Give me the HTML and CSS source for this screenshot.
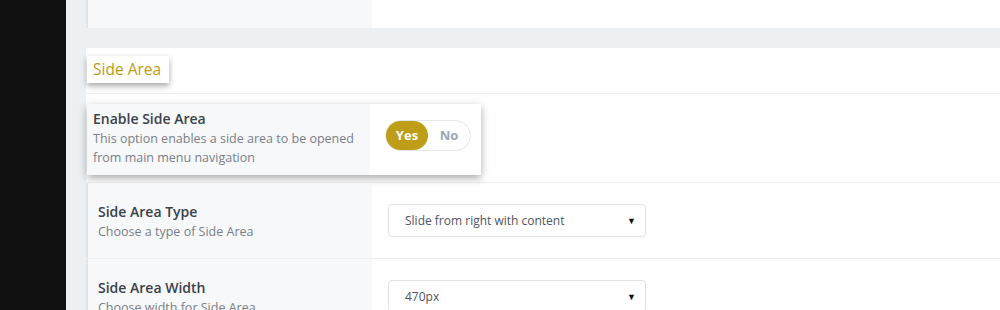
FILE: index.html
```html
<!DOCTYPE html>
<html lang="en">
<head>
    <meta charset="UTF-8">
    <title>Side Area Options</title>
    <link rel="stylesheet" href="styles.css">
</head>
<body>
    <div class="sidebar"></div>
    <main class="main">
        <div class="panel panel-top">
            <div class="opt-row">
                <div class="opt-label"></div>
                <div class="opt-field"></div>
            </div>
        </div>

        <div class="panel section">
            <div class="section-head">
                <h2 class="section-title">Side Area</h2>
            </div>

            <div class="opt-row opt-row-active">
                <div class="card">
                    <div class="card-label">
                        <h3 class="opt-title">Enable Side Area</h3>
                        <p class="opt-desc">This option enables a side area to be opened from main menu navigation</p>
                    </div>
                    <div class="card-field">
                        <div class="switch">
                            <span class="switch-btn on">Yes</span>
                            <span class="switch-btn">No</span>
                        </div>
                    </div>
                </div>
            </div>

            <div class="opt-row">
                <div class="opt-label">
                    <h3 class="opt-title">Side Area Type</h3>
                    <p class="opt-desc">Choose a type of Side Area</p>
                </div>
                <div class="opt-field">
                    <div class="select">
                        <span>Slide from right with content</span>
                        <span class="caret">&#9660;</span>
                    </div>
                </div>
            </div>

            <div class="opt-row">
                <div class="opt-label">
                    <h3 class="opt-title">Side Area Width</h3>
                    <p class="opt-desc">Choose width for Side Area</p>
                </div>
                <div class="opt-field">
                    <div class="select">
                        <span>470px</span>
                        <span class="caret">&#9660;</span>
                    </div>
                </div>
            </div>
        </div>
    </main>
</body>
</html>
```

FILE: styles.css
```css
body {
    margin: 0;
    background-color: #111111;
    font-family: "Open Sans", Arial, sans-serif;
    display: flex;
    height: 310px;
    overflow: hidden;
}
.sidebar {
    width: 66px;
    flex-shrink: 0;
}
.main {
    flex: 1;
    background-color: #edf0f3;
    padding-left: 20px;
}
.panel {
    background-color: #fff;
}
.panel-top .opt-row {
    height: 28px;
    border-top: none;
}
.section {
    margin-top: 20px;
}
.section-head {
    padding: 8px 0 10px;
    border-bottom: 1px solid #eef0f2;
}
.section-title {
    display: inline-block;
    margin: 0 0 0 1px;
    padding: 0 8px 0 6px;
    height: 27px;
    line-height: 27px;
    font-size: 15.5px;
    font-weight: 400;
    color: #b99c16;
    background-color: #fff;
    box-shadow: 0 3px 6px rgba(0, 0, 0, 0.35);
}
.opt-row {
    display: flex;
    border-top: 1px solid #eceef1;
}
.section-head + .opt-row {
    border-top: none;
}
.opt-label {
    width: 274px;
    padding: 19px 0 0 10px;
    background-color: #f6f8fa;
    border-left: 2px solid #dfe4ea;
    height: 56px;
}
.panel-top .opt-label {
    width: 284px;
    height: 28px;
    padding: 0;
}
.opt-field {
    flex: 1;
    padding: 21px 0 0 16px;
}
.opt-title {
    margin: 0;
    font-size: 14px;
    font-weight: 600;
    line-height: 20px;
    color: #3b4148;
}
.opt-desc {
    margin: 0;
    font-size: 12.5px;
    line-height: 19px;
    color: #7b7e88;
}
.opt-row-active {
    border-top: none;
    padding: 10px 0 7px 1px;
}
.card {
    display: flex;
    width: 394px;
    height: 71px;
    box-shadow: 0 3px 8px rgba(0, 0, 0, 0.35);
    background-color: #fff;
}
.card-label {
    width: 277px;
    padding: 5px 0 0 6px;
    background-color: #f6f8fa;
}
.card-label .opt-desc {
    width: 270px;
}
.card-field {
    flex: 1;
    padding: 16px 0 0 15px;
}
.switch {
    display: flex;
    width: 84px;
    height: 29px;
    border: 1px solid #e3e6ea;
    border-radius: 16px;
}
.switch-btn {
    width: 42px;
    line-height: 29px;
    text-align: center;
    font-size: 13px;
    font-weight: 700;
    color: #9ba6b1;
    border-radius: 15px;
}
.switch-btn.on {
    background-color: #bd9e16;
    color: #fff;
}
.select {
    display: flex;
    justify-content: space-between;
    align-items: center;
    width: 231px;
    height: 31px;
    padding: 0 9px 0 16px;
    border: 1px solid #dfe2e6;
    border-radius: 4px;
    font-size: 12px;
    color: #4f555c;
}
.caret {
    font-size: 9px;
    color: #111;
}
```
